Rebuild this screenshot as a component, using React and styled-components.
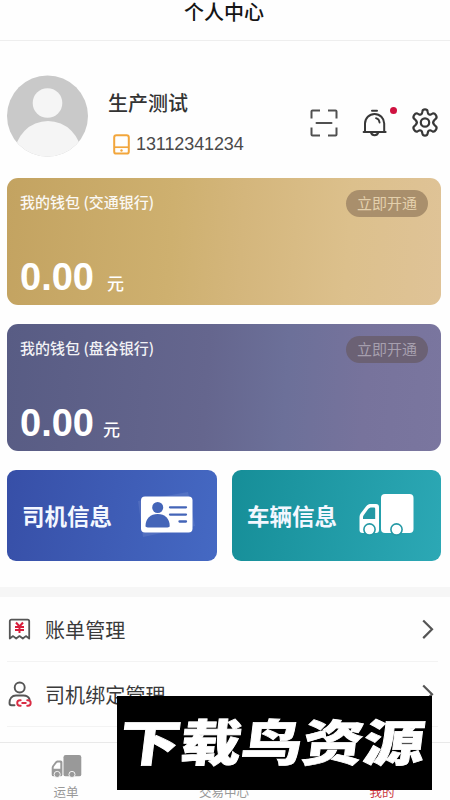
import React from 'react';
import styled, { createGlobalStyle } from 'styled-components';

const GlobalStyle = createGlobalStyle`
  * {
    box-sizing: border-box;
  }

  html,
  body {
    margin: 0;
    padding: 0;
    overflow: hidden;
    background: #fff;
  }
`;

const Page = styled.div`
  position: relative;
  width: 450px;
  height: 800px;
  display: flex;
  flex-direction: column;
  overflow: hidden;
  background: #fefefe;
  color: #333;
  font-family: 'Liberation Sans', 'Noto Sans CJK SC', sans-serif;

  svg {
    display: block;
    flex-shrink: 0;
  }
`;

const Header = styled.header`
  height: 41px;
  padding: 0 2px 15px 0;
  display: flex;
  flex-shrink: 0;
  align-items: center;
  justify-content: center;
  border-bottom: 1px solid #eeeeee;
`;

const Title = styled.h1`
  margin: 0;
  font-size: 20px;
  line-height: 24px;
  font-weight: 500;
  color: #151515;
`;

const Profile = styled.section`
  height: 137px;
  padding: 34px 11px 0 7px;
  display: flex;
  flex-shrink: 0;
  align-items: flex-start;
`;

const UserInfo = styled.div`
  flex: 1;
  padding: 15px 0 0 19px;
`;

const UserName = styled.div`
  font-size: 20px;
  line-height: 28px;
  font-weight: 500;
  color: #333;
`;

const Phone = styled.div`
  display: flex;
  align-items: center;
  gap: 6px;
  margin-top: 14px;
  padding-left: 5px;
  font-size: 18px;
  line-height: 24px;
  letter-spacing: -0.1px;
  color: #4a4a4a;
`;

const Actions = styled.div`
  display: flex;
  align-items: center;
  gap: 24px;
  padding-top: 33px;
`;

const BellButton = styled.div`
  position: relative;
`;

const Badge = styled.span`
  position: absolute;
  top: -2px;
  right: -10px;
  width: 7px;
  height: 7px;
  border-radius: 50%;
  background: #cf1240;
`;

const Cards = styled.section`
  height: 409px;
  padding: 0 9px 0 7px;
  display: flex;
  flex-direction: column;
  flex-shrink: 0;
`;

const WalletCard = styled.div`
  height: 127px;
  margin-bottom: 19px;
  padding: 12px 13px 7px;
  display: flex;
  flex-direction: column;
  justify-content: space-between;
  border-radius: 11px;
  color: #fff;
  background: ${props => props.$purple
    ? 'linear-gradient(94deg, #585c84 0%, #65668e 46%, #6c7099 64%, #77739c 82%, #7a769f 100%)'
    : 'linear-gradient(94deg, #c3a361 0%, #ceb06f 38%, #d4b67c 54%, #dcc08c 78%, #dfc397 100%)'};
`;

const WalletTop = styled.div`
  display: flex;
  align-items: flex-start;
  justify-content: space-between;
`;

const WalletName = styled.span`
  font-size: 15px;
  line-height: 24px;
  font-weight: 500;
  font-family: 'Noto Sans CJK SC', sans-serif;
  opacity: 0.92;
`;

const OpenButton = styled.button`
  width: 82px;
  height: 27px;
  padding: 1px 0 0;
  border: none;
  border-radius: 14px;
  font-family: inherit;
  font-size: 15px;
  line-height: 26px;
  color: ${props => (props.$purple ? '#a69fae' : '#e4d0ac')};
  background: ${props => (props.$purple ? '#6b6174' : '#a98f6c')};
`;

const Balance = styled.div`
  display: flex;
  align-items: baseline;
  gap: ${props => props.$gap}px;
`;

const Amount = styled.span`
  font-size: 38px;
  line-height: 42px;
  font-weight: 700;
`;

const Unit = styled.span`
  font-size: 17px;
  font-weight: 500;
`;

const Tiles = styled.div`
  display: grid;
  grid-template-columns: 210px 209px;
  justify-content: space-between;
`;

const Tile = styled.div`
  height: 91px;
  padding: 0 ${props => props.$end}px 2px 15px;
  display: flex;
  align-items: center;
  justify-content: space-between;
  border-radius: 9px;
  font-size: 22.5px;
  font-weight: 700;
  color: #f3f7ff;
  background: ${props => props.$background};
`;

const Divider = styled.div`
  height: 10px;
  flex-shrink: 0;
  background: #f6f6f6;
`;

const MenuRow = styled.div`
  height: 65px;
  margin: 0 12px 0 7px;
  padding-right: 4px;
  display: flex;
  flex-shrink: 0;
  align-items: center;
  border-bottom: 1px solid #f3f3f3;
`;

const MenuLabel = styled.span`
  flex: 1;
  padding: 3px 0 0 13px;
  font-size: 20px;
  line-height: 28px;
  letter-spacing: 0.1px;
  color: #3a3a3a;
`;

const TabBar = styled.nav`
  height: 58px;
  margin: auto -11px 0 -13px;
  display: flex;
  flex-shrink: 0;
  border-top: 1px solid #e9e9e9;
  background: #fefefe;
`;

const Tab = styled.div`
  width: 158px;
  display: flex;
  flex-direction: column;
  align-items: center;
  font-size: 12.5px;
  line-height: 18px;
  color: ${props => (props.$active ? '#c9353d' : '#999')};
`;

const TabIcon = styled.div`
  height: 41px;
  padding-top: 12px;
  flex-shrink: 0;
`;

const Banner = styled.div`
  position: absolute;
  left: 117px;
  top: 696px;
  width: 315px;
  height: 94px;
  display: flex;
  align-items: center;
  justify-content: center;
  background: #000;
`;

const BannerText = styled.span`
  font-family: 'Noto Sans CJK SC', sans-serif;
  font-size: 61px;
  line-height: 94px;
  font-weight: 900;
  white-space: nowrap;
  color: #fff;
  -webkit-text-stroke: 1px #fff;
  transform: translate(-2px, -3px) skewX(-7deg) scaleY(0.81);
`;

const Avatar = () => (
  <svg width="82" height="82" viewBox="0 0 82 82">
    <defs>
      <clipPath id="avatar">
        <circle cx="40.5" cy="41" r="40.5" />
      </clipPath>
    </defs>
    <g clipPath="url(#avatar)">
      <rect width="82" height="82" fill="#c9c9c9" />
      <circle cx="40.5" cy="28" r="14.8" fill="#f5f5f5" />
      <circle cx="41" cy="79" r="33" fill="#f5f5f5" />
    </g>
  </svg>
);

const PhoneIcon = () => (
  <svg width="17" height="21" viewBox="0 0 17 21" fill="none" stroke="#f2a63c" strokeWidth="2">
    <rect x="1.2" y="1.2" width="14.6" height="18.4" rx="2.2" />
    <path d="M1.2 13.2h14.6" strokeWidth="1.7" />
    <circle cx="8.5" cy="16.5" r="1.2" fill="#f2a63c" stroke="none" />
  </svg>
);

const ScanIcon = () => (
  <svg width="28" height="28" viewBox="0 0 28 28" fill="none" stroke="#505050" strokeWidth="2">
    <path d="M1.5 9.5v-7a1 1 0 0 1 1-1H10M18 1.5h7.5a1 1 0 0 1 1 1v7M26.5 18.5v7a1 1 0 0 1-1 1H18M10 26.5H2.5a1 1 0 0 1-1-1v-7" />
    <path d="M6.5 14h15" strokeLinecap="round" />
  </svg>
);

const BellIcon = () => (
  <svg width="25" height="28" viewBox="0 0 25 28" fill="none" stroke="#383838" strokeWidth="2" strokeLinecap="round">
    <path d="M10 1.8h5" />
    <path d="M3 22.4V14.5a9.6 9.6 0 0 1 19.2 0v7.9" />
    <path d="M1.6 22.9h22" />
    <path d="M8.9 23.4c1.2 3.8 6.2 3.8 7.4 0" />
    <path d="M14 9.2c2.2.6 3.4 2.2 3.6 4.5" strokeWidth="1.8" />
  </svg>
);

const GearIcon = () => (
  <svg width="28" height="29" viewBox="0 0 28 29" fill="none" stroke="#383838" strokeWidth="2.2" strokeLinejoin="round">
    <path d="M11.4 3.4C11.8 .8 16.2 .8 16.6 3.4L17 5.1C17.4 6.4 18.8 7 20 6.4L21.5 5.6C24 4.6 26.8 8.9 24.9 10.6L23.2 12.2C22 13.5 22 15.5 23.2 16.8L24.9 18.4C26.8 20.1 24 24.4 21.5 23.4L20 22.6C18.8 22 17.4 22.6 17 23.9L16.6 25.6C16.2 28.2 11.8 28.2 11.4 25.6L11 23.9C10.6 22.6 9.2 22 8 22.6L6.5 23.4C4 24.4 1.2 20.1 3.1 18.4L4.8 16.8C6 15.5 6 13.5 4.8 12.2L3.1 10.6C1.2 8.9 4 4.6 6.5 5.6L8 6.4C9.2 7 10.6 6.4 11 5.1Z" />
    <circle cx="14" cy="14.5" r="4.2" />
  </svg>
);

const IdCardIcon = () => (
  <svg width="60" height="48" viewBox="0 0 60 48">
    <path d="M0 10L50 1l7 34L5 46z" fill="#fff" opacity=".09" />
    <rect x="3" y="5.5" width="51.5" height="36" rx="4" fill="#fff" />
    <circle cx="19.7" cy="16.5" r="5.5" fill="#4465b8" />
    <path d="M7.5 35c0-7.5 5-12 12.2-12s12 4.5 12 12c0 1-1 1.4-2.2 1.4H9.8C8.5 36.4 7.5 36 7.5 35z" fill="#4465b8" />
    <path d="M32 16.3h16M32 23.6h16M41.5 30.5H48" stroke="#4465b8" strokeWidth="2.3" strokeLinecap="round" />
  </svg>
);

const TruckIcon = ({ width, height, color, hole }) => (
  <svg width={width} height={height} viewBox="0 0 55 42">
    <rect x="22" y="0" width="32.5" height="39" rx="4" fill={color} />
    <path d="M12.5 10H17a3 3 0 0 1 3 3v23a3 3 0 0 1-3 3H3.5a3 3 0 0 1-3-3V23.5c0-2 .5-3 1.5-4.5l5-6.5c1.5-2 3-2.5 5.5-2.5z" fill={color} />
    <path d="M12.8 13.5H15a1.2 1.2 0 0 1 1.2 1.2V25H4v-1.5c0-1.2.3-1.8 1-2.8l4-5.4c1-1.3 2-1.8 3.8-1.8z" fill={hole} />
    <circle cx="10.5" cy="35.5" r="5.6" fill={color} stroke={hole} strokeWidth="1.6" />
    <circle cx="37.5" cy="35.5" r="5.6" fill={color} stroke={hole} strokeWidth="1.6" />
  </svg>
);

const BillIcon = () => (
  <svg width="25" height="22" viewBox="0 0 25 22" fill="none" stroke="#555" strokeWidth="1.8">
    <path d="M2.8 20.5V3.2a1.6 1.6 0 0 1 1.6-1.6h16.2a1.6 1.6 0 0 1 1.6 1.6V20.5l-3.3-2.4-3.1 2.4-3.3-2.4-3.3 2.4-3.1-2.4z" strokeLinejoin="round" />
    <path d="M9 4.5l3.5 4 3.5-4M8 8.9h9M8 12h9M12.5 8.5v6.5" stroke="#d81e3c" strokeWidth="2" />
  </svg>
);

const DriverIcon = () => (
  <svg width="25" height="26" viewBox="0 0 25 26" fill="none" stroke="#555" strokeWidth="1.9" strokeLinecap="round">
    <circle cx="12.7" cy="6.5" r="5" />
    <path d="M7.5 24.3H4.5c-1.5 0-2-.8-2-2.3 0-4.5 2.5-7.5 6.5-7.5h7.5c3.2 0 5.2 1.5 6.1 3.9" />
    <path d="M13.7 19.3h-.8a2.7 2.7 0 0 0 0 5.4h.8M20.2 19.3h.8a2.7 2.7 0 0 1 0 5.4h-.8M15.2 22h3.6" stroke="#d92c43" strokeWidth="1.9" />
  </svg>
);

const ChevronIcon = () => (
  <svg width="12" height="20" viewBox="0 0 12 20" fill="none" stroke="#555" strokeWidth="2.2">
    <path d="M1.2 1.5L10 10.3l-8.8 8.8" />
  </svg>
);

const wallets = [
  { name: '我的钱包 (交通银行)', purple: false, gap: 13 },
  { name: '我的钱包 (盘谷银行)', purple: true, gap: 9 },
];

function App() {
  return (
    <>
      <GlobalStyle />
      <Page>
        <Header>
          <Title>个人中心</Title>
        </Header>

        <Profile>
          <Avatar />
          <UserInfo>
            <UserName>生产测试</UserName>
            <Phone>
              <PhoneIcon />
              13112341234
            </Phone>
          </UserInfo>
          <Actions>
            <ScanIcon />
            <BellButton>
              <BellIcon />
              <Badge />
            </BellButton>
            <GearIcon />
          </Actions>
        </Profile>

        <Cards>
          {wallets.map((wallet) => (
            <WalletCard key={wallet.name} $purple={wallet.purple}>
              <WalletTop>
                <WalletName>{wallet.name}</WalletName>
                <OpenButton $purple={wallet.purple}>立即开通</OpenButton>
              </WalletTop>
              <Balance $gap={wallet.gap}>
                <Amount>0.00</Amount>
                <Unit>元</Unit>
              </Balance>
            </WalletCard>
          ))}
          <Tiles>
            <Tile $end={19} $background="linear-gradient(100deg, #374fa7, #4569c3)">
              司机信息
              <IdCardIcon />
            </Tile>
            <Tile $end={27} $background="linear-gradient(100deg, #168e98, #2ca8b5)">
              车辆信息
              <TruckIcon width={55} height={42} color="#fff" hole="#2499a5" />
            </Tile>
          </Tiles>
        </Cards>

        <Divider />

        <MenuRow>
          <BillIcon />
          <MenuLabel>账单管理</MenuLabel>
          <ChevronIcon />
        </MenuRow>
        <MenuRow>
          <DriverIcon />
          <MenuLabel>司机绑定管理</MenuLabel>
          <ChevronIcon />
        </MenuRow>

        <TabBar>
          <Tab>
            <TabIcon>
              <TruckIcon width={31} height={23} color="#999" hole="#fefefe" />
            </TabIcon>
            运单
          </Tab>
          <Tab>
            <TabIcon />
            交易中心
          </Tab>
          <Tab $active>
            <TabIcon />
            我的
          </Tab>
        </TabBar>

        <Banner>
          <BannerText>下载鸟资源</BannerText>
        </Banner>
      </Page>
    </>
  );
}

export default App;
